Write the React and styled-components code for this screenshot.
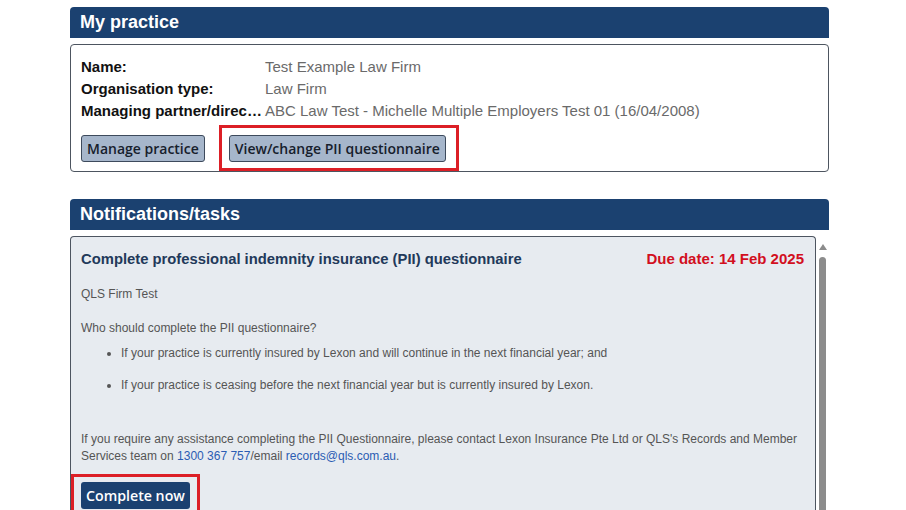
import React from "react";
import styled, { createGlobalStyle } from "styled-components";

const GlobalStyle = createGlobalStyle`
  body {
    margin: 0;
    background: #fff;
    font-family: "Liberation Sans", Arial, sans-serif;
  }
`;

const Page = styled.div`
  width: 759px;
  margin-left: 70px;
  padding-top: 7px;
`;

const SectionHeader = styled.h2`
  margin: 0;
  height: 31px;
  padding-left: 10px;
  display: flex;
  align-items: center;
  background: #1b4170;
  border-radius: 4px 4px 0 0;
  color: #fff;
  font-size: 18px;
  font-weight: bold;
`;

const Panel = styled.div`
  margin-top: 6px;
  border: 1px solid #4d5560;
  border-radius: 4px;
  background: #fff;
  padding: 11px 10px 9px 10px;
`;

const Details = styled.div`
  display: grid;
  grid-template-columns: 184px 1fr;
  line-height: 22px;
`;

const Label = styled.div`
  font-size: 15px;
  font-weight: bold;
  color: #111;
  white-space: nowrap;
  overflow: hidden;
  text-overflow: ellipsis;
`;

const Value = styled.div`
  font-size: 15px;
  color: #6a6a6a;
  white-space: nowrap;
`;

const Actions = styled.div`
  display: flex;
  align-items: flex-start;
  gap: 24px;
  margin-top: 13px;
`;

/* red annotation frame drawn around a button, kept out of the flow by negative margins */
const Highlight = styled.div`
  display: flex;
  border: 3px solid #dc1f26;
  padding: ${(p) => p.$pad};
  margin: ${(p) => p.$margin};
`;

const GreyButton = styled.button`
  height: 27px;
  padding: 0 5px;
  background: #a6b6cb;
  border: 1px solid #3d4a5c;
  border-radius: 3px;
  font-family: "Open Sans", sans-serif;
  font-size: 14px;
  font-weight: 600;
  color: #16202c;
`;

const Spacer = styled.div`
  height: 27px;
`;

const ScrollArea = styled.div`
  display: flex;
  margin-top: 6px;
`;

const TaskBox = styled.div`
  flex: 1;
  height: 320px;
  border: 1px solid #4d5560;
  border-bottom: none;
  border-radius: 4px 4px 0 0;
  background: #e7ebf0;
  padding: 13px 11px 0 10px;
  color: #555;
`;

const Scrollbar = styled.div`
  width: 13px;
  display: flex;
  flex-direction: column;
  align-items: center;
  padding-top: 8px;
  gap: 7px;
`;

const Arrow = styled.div`
  width: 0;
  height: 0;
  border-left: 4px solid transparent;
  border-right: 4px solid transparent;
  border-bottom: 6px solid #8c8c8c;
`;

const Thumb = styled.div`
  width: 7px;
  height: 260px;
  background: #8c8c8c;
  border-radius: 4px 4px 0 0;
`;

const TaskHead = styled.div`
  display: flex;
  justify-content: space-between;
  align-items: center;
  font-weight: bold;
  line-height: 18px;
`;

const TaskTitle = styled.div`
  font-size: 14.8px;
  color: #22395a;
`;

const DueDate = styled.div`
  font-size: 15px;
  color: #d20f1e;
`;

const Text = styled.p`
  margin: ${(p) => p.$mt || 0}px 0 0;
  font-size: 12px;
  line-height: 17px;
  color: #555;
`;

const Bullets = styled.ul`
  margin: 8px 0 0;
  padding-left: 40px;
  font-size: 12px;
  line-height: 17px;
  color: #555;

  li {
    margin-bottom: 15px;
  }
`;

const Link = styled.a`
  color: #2b5cb3;
  text-decoration: none;
`;

const ButtonRow = styled.div`
  display: flex;
  margin-top: 17px;
`;

const PrimaryButton = styled.button`
  height: 27px;
  padding: 0 5px;
  background: #1b4170;
  border: none;
  border-radius: 3px;
  color: #fff;
  font-family: "Open Sans", sans-serif;
  font-size: 14.2px;
  font-weight: 600;
`;

const details = [
  ["Name:", "Test Example Law Firm"],
  ["Organisation type:", "Law Firm"],
  ["Managing partner/director:", "ABC Law Test - Michelle Multiple Employers Test 01 (16/04/2008)"],
];

export default function App() {
  return (
    <>
      <GlobalStyle />
      <Page>
        <SectionHeader>My practice</SectionHeader>
        <Panel>
          <Details>
            {details.map(([label, value]) => (
              <React.Fragment key={label}>
                <Label>{label}</Label>
                <Value>{value}</Value>
              </React.Fragment>
            ))}
          </Details>
          <Actions>
            <GreyButton>Manage practice</GreyButton>
            <Highlight $pad="7px 10px 6px 7px" $margin="-10px -13px -9px -10px">
              <GreyButton>View/change PII questionnaire</GreyButton>
            </Highlight>
          </Actions>
        </Panel>
        <Spacer />
        <SectionHeader>Notifications/tasks</SectionHeader>
        <ScrollArea>
          <TaskBox>
            <TaskHead>
              <TaskTitle>Complete professional indemnity insurance (PII) questionnaire</TaskTitle>
              <DueDate>Due date: 14 Feb 2025</DueDate>
            </TaskHead>
            <Text $mt={18}>QLS Firm Test</Text>
            <Text $mt={17}>Who should complete the PII questionnaire?</Text>
            <Bullets>
              <li>If your practice is currently insured by Lexon and will continue in the next financial year; and</li>
              <li>If your practice is ceasing before the next financial year but is currently insured by Lexon.</li>
            </Bullets>
            <Text $mt={37}>
              If you require any assistance completing the PII Questionnaire, please contact Lexon Insurance Pte Ltd or QLS's Records and Member
              Services team on <Link href="#">1300 367 757</Link>/email <Link href="#">records@qls.com.au</Link>.
            </Text>
            <ButtonRow>
              <Highlight $pad="5px 7px 7px 7px" $margin="-8px -10px -10px -10px">
                <PrimaryButton>Complete now</PrimaryButton>
              </Highlight>
            </ButtonRow>
          </TaskBox>
          <Scrollbar>
            <Arrow />
            <Thumb />
          </Scrollbar>
        </ScrollArea>
      </Page>
    </>
  );
}
